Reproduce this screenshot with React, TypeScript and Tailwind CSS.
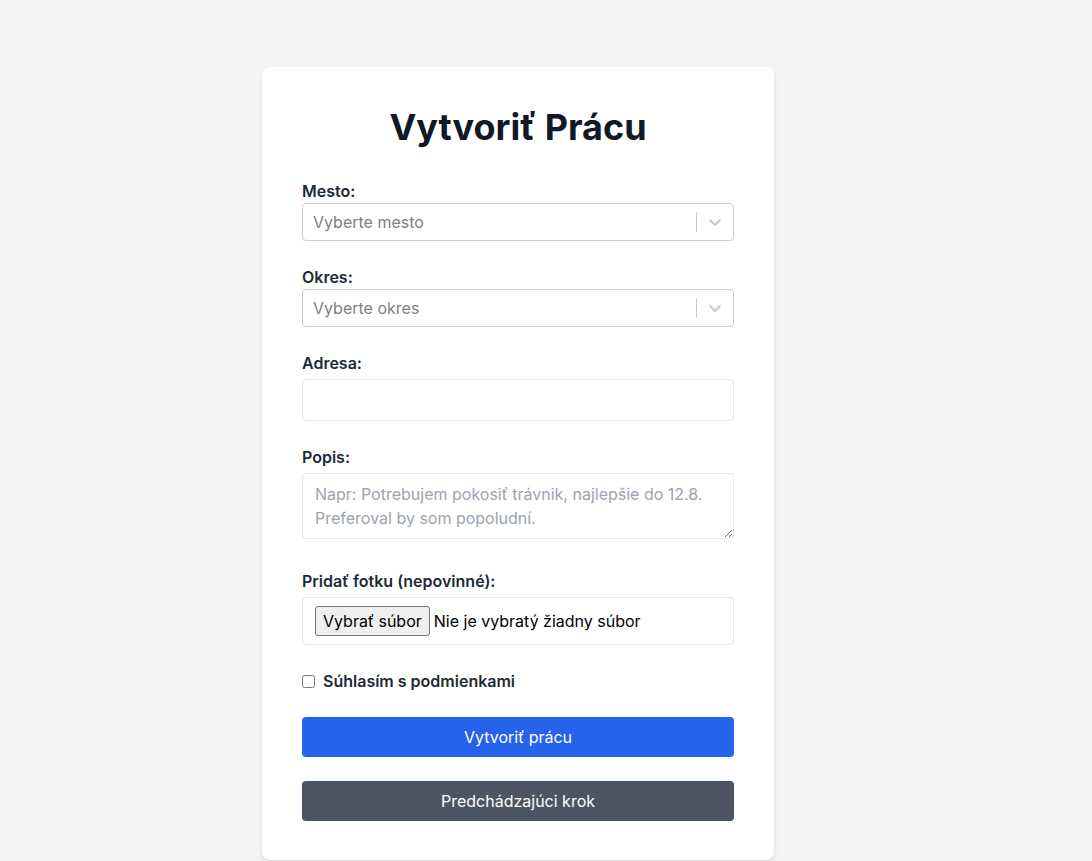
import React from 'react';

const font = { fontFamily: 'Inter, "Noto Sans", sans-serif' };

function Chevron() {
  return (
    <svg viewBox="0 0 20 20" width="20" height="20" className="fill-[#cccccc]" aria-hidden="true">
      <path d="M4.516 7.548c0.436-0.446 1.043-0.481 1.576 0l3.908 3.747 3.908-3.747c0.533-0.481 1.141-0.446 1.574 0 0.436 0.445 0.408 1.197 0 1.615-0.406 0.418-4.695 4.502-4.695 4.502-0.217 0.223-0.502 0.335-0.787 0.335s-0.57-0.112-0.789-0.335c0 0-4.287-4.084-4.695-4.502s-0.436-1.17 0-1.615z" />
    </svg>
  );
}

function SelectBox({ placeholder }: { placeholder: string }) {
  return (
    <div className="flex h-[38px] items-center rounded border border-[#cccccc] bg-white">
      <div className="flex-1 px-2">
        <span className="ml-0.5 text-base text-[#808080]">{placeholder}</span>
      </div>
      <span className="my-2 h-5 w-px self-center bg-[#cccccc]" />
      <div className="p-2">
        <Chevron />
      </div>
    </div>
  );
}

function Label({ children }: { children: React.ReactNode }) {
  return <label className="block text-base font-semibold leading-6 text-[#1f2937]">{children}</label>;
}

export default function App() {
  return (
    <div className="min-h-screen bg-[#f3f4f6] pl-[262px] pt-[67px]" style={font}>
      <div className="w-[512px] rounded-lg bg-white px-10 pb-[39px] pt-10 shadow-md">
        <h1 className="mb-8 text-center text-4xl font-bold text-[#111827]">Vytvoriť Prácu</h1>

        <div className="mb-6">
          <Label>Mesto:</Label>
          <SelectBox placeholder="Vyberte mesto" />
        </div>

        <div className="mb-6">
          <Label>Okres:</Label>
          <SelectBox placeholder="Vyberte okres" />
        </div>

        <div className="mb-6">
          <Label>Adresa:</Label>
          <input
            type="text"
            className="mt-1 block w-full rounded border border-[#e5e7eb] px-3 py-2 text-base leading-6 text-[#111827] outline-none"
          />
        </div>

        <div className="mb-[30px]">
          <Label>Popis:</Label>
          <textarea
            rows={2}
            placeholder="Napr: Potrebujem pokosiť trávnik, najlepšie do 12.8. Preferoval by som popoludní."
            className="mt-1 block w-full rounded border border-[#e5e7eb] px-3 py-2 text-base leading-6 text-[#111827] outline-none placeholder:text-[#9ca3af]"
          />
        </div>

        <div className="mb-6">
          <Label>Pridať fotku (nepovinné):</Label>
          <div className="mt-1 flex h-12 items-center rounded border border-[#e5e7eb] px-3 text-base text-black">
            <span className="flex h-[30px] items-center rounded-[3px] border border-[#767676] bg-[#efefef] px-[7px]">
              Vybrať súbor
            </span>
            <span className="ml-1">Nie je vybratý žiadny súbor</span>
          </div>
        </div>

        <div className="mb-6 flex h-6 items-center">
          <input type="checkbox" className="m-0 h-[13px] w-[13px]" />
          <span className="ml-2 text-base font-semibold text-[#1f2937]">Súhlasím s podmienkami</span>
        </div>

        <button className="mb-6 block h-10 w-full rounded bg-[#2563eb] text-base text-white">Vytvoriť prácu</button>
        <button className="block h-10 w-full rounded bg-[#4b5563] text-base text-white">Predchádzajúci krok</button>
      </div>
    </div>
  );
}
